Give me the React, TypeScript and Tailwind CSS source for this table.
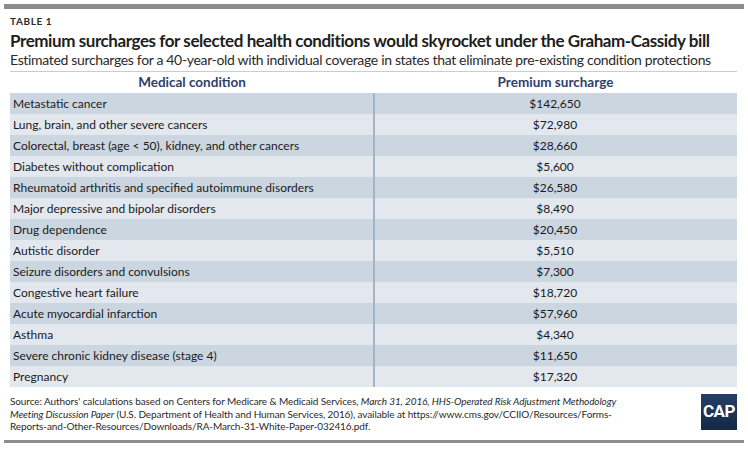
const ROWS: [string, string][] = [
  ["Metastatic cancer", "$142,650"],
  ["Lung, brain, and other severe cancers", "$72,980"],
  ["Colorectal, breast (age < 50), kidney, and other cancers", "$28,660"],
  ["Diabetes without complication", "$5,600"],
  ["Rheumatoid arthritis and specified autoimmune disorders", "$26,580"],
  ["Major depressive and bipolar disorders", "$8,490"],
  ["Drug dependence", "$20,450"],
  ["Autistic disorder", "$5,510"],
  ["Seizure disorders and convulsions", "$7,300"],
  ["Congestive heart failure", "$18,720"],
  ["Acute myocardial infarction", "$57,960"],
  ["Asthma", "$4,340"],
  ["Severe chronic kidney disease (stage 4)", "$11,650"],
  ["Pregnancy", "$17,320"],
];

export default function App() {
  return (
    <div
      className="h-[449px] w-[748px] overflow-hidden bg-white pt-1"
      style={{ fontFamily: "Lato, 'Liberation Sans', sans-serif" }}
    >
      <div className="mx-1 h-[5px] bg-[#8c8c8c]" />

      <div className="px-[10px]">
        <p className="mt-[7px] text-[10px] font-bold leading-[11px] tracking-[0.06em] text-[#2b2b2b]">
          TABLE 1
        </p>
        <h1 className="mt-[4px] whitespace-nowrap text-[17px] font-bold leading-[20px] tracking-[-0.025em] text-[#1e1e1e]">
          Premium surcharges for selected health conditions would skyrocket under the Graham-Cassidy bill
        </h1>
        <p className="whitespace-nowrap text-[14px] leading-[18px] tracking-[-0.024em] text-[#2a2a2a]">
          Estimated surcharges for a 40-year-old with individual coverage in states that eliminate pre-existing condition protections
        </p>
        <div className="mt-[2px] mr-[1px] h-px bg-[#c3ceda]" />

        {/* tableau */}
        <div className="mr-[1px]">
          <div className="flex h-[21px] items-center text-[13.5px] font-bold text-[#2e3f6b]">
            <div className="w-[364px] text-center">Medical condition</div>
            <div className="flex-1 text-center">Premium surcharge</div>
          </div>
          <div className="relative">
            {ROWS.map(([label, value], i) => (
              <div
                key={label}
                className={`flex h-[21px] items-center text-[12px] text-[#1a1a1a] ${
                  i % 2 === 0 ? "bg-[#ccd6e0]" : "bg-[#e3e8ee]"
                }`}
              >
                <div className="w-[363px] pl-[3px]">{label}</div>
                <div className="flex-1 text-center">{value}</div>
              </div>
            ))}
            <div className="absolute top-0 bottom-0 left-[363px] w-[2px] bg-[#a5b4c5]" />
          </div>
        </div>

        <div className="mt-[8px] flex items-start justify-between">
          <p className="text-[10px] leading-[12.5px] tracking-[-0.01em] text-[#2a2a2a]">
            Source: Authors' calculations based on Centers for Medicare &amp; Medicaid Services,{" "}
            <i>March 31, 2016, HHS-Operated Risk Adjustment Methodology</i>
            <br />
            <i>Meeting Discussion Paper</i> (U.S. Department of Health and Human Services, 2016), available at https://www.cms.gov/CCIIO/Resources/Forms-
            <br />
            Reports-and-Other-Resources/Downloads/RA-March-31-White-Paper-032416.pdf.
          </p>
          <div className="mt-[-1px] mr-[1px] flex h-[36px] w-[36px] shrink-0 items-center justify-center bg-gradient-to-b from-[#24406a] to-[#132844]">
            <span
              className="text-[17px] font-bold tracking-[-0.03em] text-white"
              style={{ fontFamily: "'Liberation Sans Narrow', 'Roboto', sans-serif" }}
            >
              CAP
            </span>
          </div>
        </div>
      </div>

      <div className="mx-1 mt-[7px] h-[3px] bg-[#8c8c8c]" />
    </div>
  );
}
